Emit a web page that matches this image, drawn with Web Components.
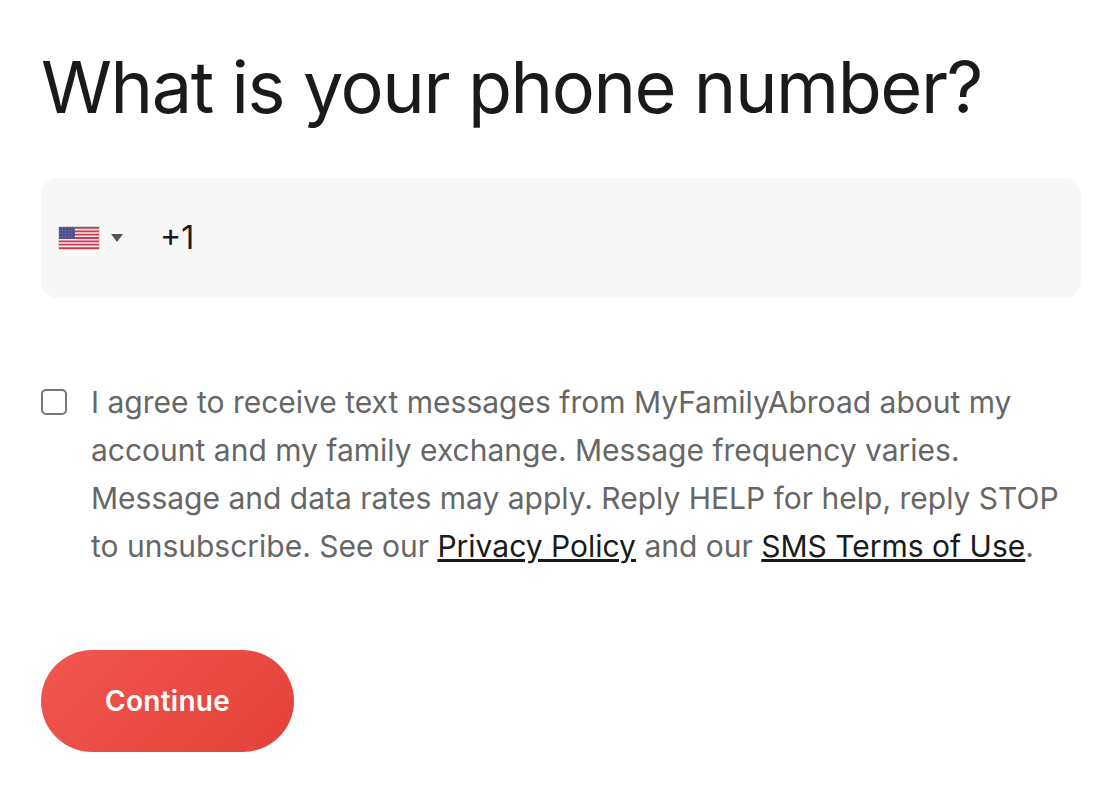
<!DOCTYPE html>
<html lang="en">
<head>
<meta charset="utf-8">
<title>Phone number</title>
<style>
body { margin: 0; background: #fff; font-family: Inter, sans-serif; color: #1a1a1a; }
</style>
</head>
<body>
<phone-step>
  <span slot="title">What is your phone number?</span>
  <phone-field></phone-field>
  <consent-check>I agree to receive text messages from MyFamilyAbroad about my account and my family exchange. Message frequency varies. Message and data rates may apply. Reply HELP for help, reply STOP to unsubscribe. See our <text-link href="#privacy">Privacy Policy</text-link> and our <text-link href="#sms-terms">SMS Terms of Use</text-link>.</consent-check>
  <primary-button slot="action">Continue</primary-button>
</phone-step>
<script>
function define(name, html, setup) {
  const template = document.createElement('template');
  template.innerHTML = html;
  customElements.define(name, class extends HTMLElement {
    constructor() {
      super();
      this.attachShadow({ mode: 'open' }).append(template.content.cloneNode(true));
    }
    connectedCallback() { if (setup) setup(this); }
  });
}

define('phone-step', `
<style>
:host { display: block; padding: 43px 37px 58px 41px; }
form { display: flex; flex-direction: column; align-items: stretch; }
h1 { margin: 0 0 47px; font-size: 72px; line-height: 88px; font-weight: 400; letter-spacing: -0.02em; }
.action { display: flex; margin-top: 80px; }
</style>
<form>
  <h1><slot name="title"></slot></h1>
  <slot></slot>
  <div class="action"><slot name="action"></slot></div>
</form>`);

define('phone-field', `
<style>
:host { display: block; margin-bottom: 80px; }
.field { display: flex; align-items: center; height: 120px; border-radius: 16px; background: #f7f7f7; }
.country { display: flex; align-items: center; gap: 11px; padding: 0 0 0 17px; height: 100%; border: 0; background: none; cursor: pointer; }
svg { display: block; }
input { flex: 1; min-width: 0; height: 100%; box-sizing: border-box; margin: 0; padding: 0 37px 2px; border: 0; outline: 0; background: none; font: 400 32px/40px Inter, sans-serif; color: #1a1a1a; }
</style>
<div class="field">
  <button class="country" type="button" aria-label="Country: United States">
    <svg width="42" height="24" viewBox="0 0 42 24" aria-hidden="true">
      <defs><pattern id="stars" width="3" height="3" patternUnits="userSpaceOnUse"><rect width="3" height="3" fill="#51528a"/><rect x="1" y="1" width="1" height="1" fill="#77779f"/></pattern></defs>
      <rect width="42" height="24" rx="1" fill="#d6d6d8"/>
      <rect x="1" y="1" width="40" height="22" fill="#f8e8eb"/>
      <path d="M1 1.9h40M1 5.3h40M1 8.6h40M1 12h40M1 15.4h40M1 18.7h40M1 22.1h40" stroke="#c73c50" stroke-width="1.8"/>
      <rect x="1" y="1" width="16" height="12" fill="url(#stars)"/>
    </svg>
    <svg width="12" height="8" viewBox="0 0 12 8" aria-hidden="true"><path d="M0 0h12L6 8z" fill="#555"/></svg>
  </button>
  <input type="tel" value="+1" aria-label="Phone number">
</div>`);

define('consent-check', `
<style>
:host { display: block; }
.row { display: flex; align-items: flex-start; gap: 24px; }
input { appearance: none; flex: none; width: 26px; height: 26px; box-sizing: border-box; margin: 11px 0 0; border: 2px solid #767676; border-radius: 5px; background: #fff; }
input:checked { background: #e8463c; border-color: #e8463c; }
label { font-size: 30px; line-height: 48px; color: #666; }
</style>
<div class="row"><input id="agree" type="checkbox"><label for="agree"><slot></slot></label></div>`);

define('text-link', `
<style>
:host { display: inline; }
a { color: #1a1a1a; text-decoration: underline; text-decoration-thickness: 3px; }
</style>
<a><slot></slot></a>`, el => { el.shadowRoot.querySelector('a').href = el.getAttribute('href'); });

define('primary-button', `
<style>
:host { display: block; }
button { display: block; padding: 32px 64px; border: 0; border-radius: 51px; font: 600 28px/38px Inter, sans-serif; letter-spacing: 0.01em; color: #fff; background: linear-gradient(135deg, #f0574f, #e4423a); cursor: pointer; }
</style>
<button type="submit"><slot></slot></button>`);
</script>
</body>
</html>
